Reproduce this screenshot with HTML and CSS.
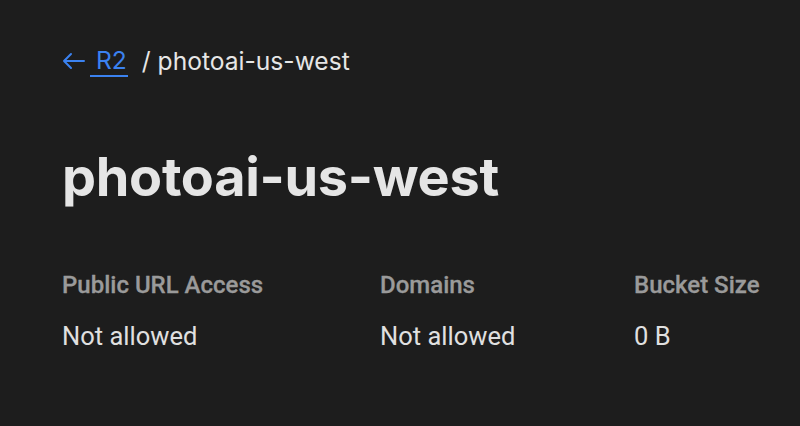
FILE: index.html
```html
<!DOCTYPE html>
<html>
<head>
<meta charset="utf-8">
<link rel="stylesheet" href="styles.css">
</head>
<body>
<main class="page">
  <nav class="crumbs">
    <a class="back" href="#">
      <svg class="arrow" width="24" height="18" viewBox="0 0 24 18" fill="none" stroke="currentColor" stroke-width="2" stroke-linecap="round" stroke-linejoin="round"><path d="M22 9H2M9 2L2 9l7 7"/></svg>
      <span class="r2">R2</span>
    </a>
    <span class="current">/ photoai-us-west</span>
  </nav>
  <h1 class="title">photoai-us-west</h1>
  <div class="stats">
    <div class="stat s1"><div class="label">Public URL Access</div><div class="value">Not allowed</div></div>
    <div class="stat s2"><div class="label">Domains</div><div class="value">Not allowed</div></div>
    <div class="stat s3"><div class="label">Bucket Size</div><div class="value">0 B</div></div>
  </div>
</main>
</body>
</html>
```
FILE: styles.css
```css
html, body { margin: 0; padding: 0; }
body { background: #1d1d1d; width: 800px; height: 426px; overflow: hidden; }
.page { padding: 44px 0 0 62px; }
.crumbs { display: flex; align-items: center; height: 34px; font-family: Inter, "Noto Sans", sans-serif; font-size: 24.6px; color: #e6e6e6; }
.back { display: flex; align-items: center; color: #3b82f0; text-decoration: none; }
.arrow { margin-right: 10px; }
.r2 { display: inline-block; padding: 0 1px 0 6px; margin-left: -6px; border-bottom: 2px solid #3b82f0; line-height: 30px; }
.current { margin-left: 14px; }
.title { margin: 66px 0 0 0; font-family: Inter, "Noto Sans", sans-serif; font-weight: 700; font-size: 54px; line-height: 66px; color: #e5e5e5; letter-spacing: -0.3px; }
.stats { display: flex; margin-top: 61px; }
.s1 { width: 318px; }
.s2 { width: 254px; }
.label { font-family: Roboto, sans-serif; font-weight: 500; font-size: 24px; color: #9a9a9a; line-height: 28px; -webkit-text-stroke: 0.3px #9a9a9a; }
.value { font-family: Roboto, sans-serif; font-size: 25.5px; color: #e0e0e0; line-height: 30px; margin-top: 22px; }
```
